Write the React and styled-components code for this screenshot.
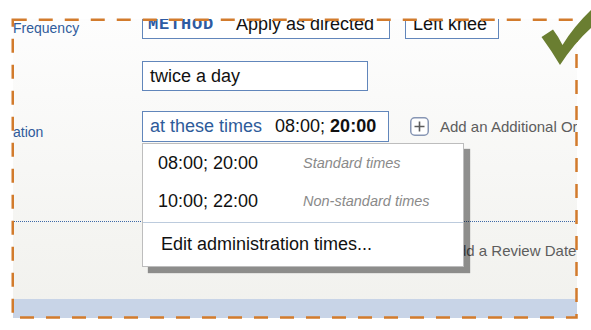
import React from "react";
import styled, { createGlobalStyle } from "styled-components";

const GlobalStyle = createGlobalStyle`
  body {
    margin: 0;
    background: #fff;
    font-family: "Liberation Sans", Arial, sans-serif;
  }
`;

const Page = styled.div`
  position: relative;
  width: 591px;
  height: 330px;
  box-sizing: border-box;
  padding: 19px 0 0 13px;
  overflow: hidden;
`;

const Viewport = styled.div`
  position: relative;
  width: 564px;
  height: 299px;
  overflow: hidden;
  display: flex;
  flex-direction: column;
  background: linear-gradient(#fdfdfd, #f1f1ed);
`;

const Row = styled.div`
  display: grid;
  grid-template-columns: 129px 1fr;
  align-items: start;
  margin-top: ${(props) => props.$top}px;
`;

const Label = styled.div`
  padding-top: ${(props) => props.$pad}px;
  font-size: 14px;
  color: #2f5b9b;
  white-space: nowrap;
`;

const FieldArea = styled.div`
  position: relative;
  display: flex;
  align-items: center;
  gap: ${(props) => props.$gap || 0}px;
  white-space: nowrap;
`;

const Field = styled.div`
  box-sizing: border-box;
  flex: none;
  width: ${(props) => props.$width}px;
  height: ${(props) => props.$height || 30}px;
  border: 1px solid #6186bb;
  background: #fff;
  padding: 0 7px;
  display: flex;
  align-items: center;
  font-size: 18px;
  color: #111;
  white-space: nowrap;
`;

const MethodTag = styled.span`
  font-family: "Liberation Mono", "Courier New", monospace;
  font-weight: bold;
  font-size: 17px;
  letter-spacing: 0.8px;
  color: #2d5ba3;
  margin: 0 22px 0 -2px;
`;

const Prefix = styled.span`
  color: #2e5b9a;
  margin-right: 13px;
`;

const Strong = styled.b`
  font-weight: bold;
  margin-left: 5px;
`;

const AddLink = styled.div`
  display: flex;
  align-items: center;
  gap: 11px;
  margin-left: ${(props) => props.$left || 0}px;
  font-size: 15px;
  color: #5d5d5d;
  white-space: nowrap;
`;

const Divider = styled.div`
  margin-top: 79px;
  border-top: 1px dotted #3f6aa8;
`;

const ReviewRow = styled.div`
  padding: 20px 0 0 435px;
`;

const Band = styled.div`
  margin-top: auto;
  height: 19px;
  background: #c8d4e7;
`;

const Menu = styled.div`
  position: absolute;
  left: 0;
  top: 32px;
  z-index: 2;
  box-sizing: border-box;
  width: 322px;
  background: #fff;
  border: 1px solid #bdbdbd;
  box-shadow: 6px 6px 1px rgba(0, 0, 0, 0.42);
`;

const Option = styled.div`
  display: grid;
  grid-template-columns: 145px 1fr;
  align-items: center;
  height: ${(props) => props.$height}px;
  padding-left: 15px;
  font-size: 18px;
  color: #111;
`;

const Hint = styled.span`
  font-size: 14.5px;
  font-style: italic;
  color: #8a8a8a;
`;

const MenuAction = styled.div`
  height: 43px;
  display: flex;
  align-items: center;
  padding-left: 18px;
  margin-top: 2px;
  border-top: 1px solid #bccbdd;
  font-size: 18px;
  color: #111;
`;

const Overlay = styled.svg`
  position: absolute;
  left: 0;
  top: 0;
  pointer-events: none;
  z-index: 5;
`;

const PlusIcon = () => (
  <svg width="19" height="19" viewBox="0 0 19 19">
    <rect x="0.75" y="0.75" width="17.5" height="17.5" rx="4" fill="#fff" stroke="#8796b4" strokeWidth="1.5" />
    <path d="M9.5 4.5v10M4.5 9.5h10" stroke="#5c5c5c" strokeWidth="1.6" />
  </svg>
);

const times = [
  { value: "08:00; 20:00", hint: "Standard times", height: 38 },
  { value: "10:00; 22:00", hint: "Non-standard times", height: 38 },
];

export default function App() {
  return (
    <Page>
      <GlobalStyle />
      <Viewport>
        <Row $top={-10}>
          <Label $pad={11}>Frequency</Label>
          <FieldArea $gap={15}>
            <Field $width={248}>
              <MethodTag>METHOD</MethodTag>
              Apply as directed
            </Field>
            <Field $width={94}>Left knee</Field>
          </FieldArea>
        </Row>
        <Row $top={22}>
          <Label />
          <FieldArea>
            <Field $width={226}>twice a day</Field>
          </FieldArea>
        </Row>
        <Row $top={20}>
          <Label $pad={13}>ation</Label>
          <FieldArea>
            <Field $width={247} $height={31}>
              <Prefix>at these times</Prefix>
              08:00;
              <Strong>20:00</Strong>
            </Field>
            <AddLink $left={21}>
              <PlusIcon />
              Add an Additional Order
            </AddLink>
            <Menu>
              {times.map((t) => (
                <Option key={t.value} $height={t.height}>
                  <span>{t.value}</span>
                  <Hint>{t.hint}</Hint>
                </Option>
              ))}
              <MenuAction>Edit administration times...</MenuAction>
            </Menu>
          </FieldArea>
        </Row>
        <Divider />
        <ReviewRow>
          <AddLink>Add a Review Date</AddLink>
        </ReviewRow>
        <Band />
      </Viewport>
      <Overlay width="591" height="330" viewBox="0 0 591 330">
        <rect
          x="12.75"
          y="19.75"
          width="563.75"
          height="297.75"
          fill="none"
          stroke="#d27b2c"
          strokeWidth="2.5"
          strokeDasharray="14 12"
        />
        <path
          d="M541.5 37 L553 29.5 Q558 36 562.5 45 Q574 26 592 9 L592 27 Q574 43 560 65 Q551 50 541.5 37 Z"
          fill="#6a7e31"
        />
      </Overlay>
    </Page>
  );
}
